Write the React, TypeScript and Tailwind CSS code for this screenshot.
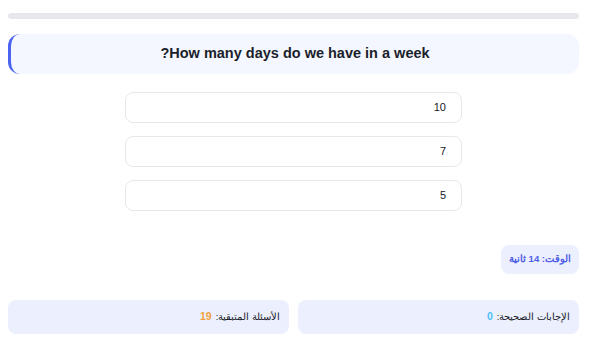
import React from 'react';

const options = ['10', '7', '5'];

const App: React.FC = () => {
  return (
    <div
      dir="rtl"
      className="w-[590px] h-[351px] bg-white pl-2 pr-[11px] pt-[13px] font-['Liberation_Sans',sans-serif]"
    >
      {/* Progress bar */}
      <div className="h-[6px] w-full rounded-full bg-[#e6e8eb]" />

      {/* Question */}
      <div className="mt-[15px] h-10 flex items-center justify-center rounded-xl border-l-[3px] border-[#4a63f0] bg-[#f4f7ff]">
        <h2 className="text-[14.5px] font-bold text-[#1b1e2b]">How many days do we have in a week?</h2>
      </div>

      {/* Options */}
      <div className="mx-auto mt-[18px] flex w-[337px] flex-col gap-[13px]">
        {options.map((o) => (
          <button
            key={o}
            className="h-[31px] w-full rounded-lg border border-[#e8e8ec] bg-white pr-[15px] text-right text-[11px] text-[#161827]"
          >
            {o}
          </button>
        ))}
      </div>

      {/* Timer */}
      <div className="mt-[34px] flex">
        <div className="h-[29px] flex items-center rounded-lg bg-[#eceffd] px-[8px] text-[9.5px] font-bold text-[#4f5ee8]">
          الوقت: 14 ثانية
        </div>
      </div>

      {/* Stats */}
      <div className="mt-[26px] grid grid-cols-2 gap-[9px]">
        <div className="h-[34px] flex items-center rounded-lg bg-[#eceffd] px-[9px] text-[9.5px] text-[#1b1e2b]">
          <span>الإجابات الصحيحة:</span>
          <span className="mr-1 text-[10.5px] font-bold text-[#4cc3f5]">0</span>
        </div>
        <div className="h-[34px] flex items-center rounded-lg bg-[#eceffd] px-[9px] text-[9.5px] text-[#1b1e2b]">
          <span>الأسئلة المتبقية:</span>
          <span className="mr-1 text-[10.5px] font-bold text-[#f0a040]">19</span>
        </div>
      </div>
    </div>
  );
};

export default App;
